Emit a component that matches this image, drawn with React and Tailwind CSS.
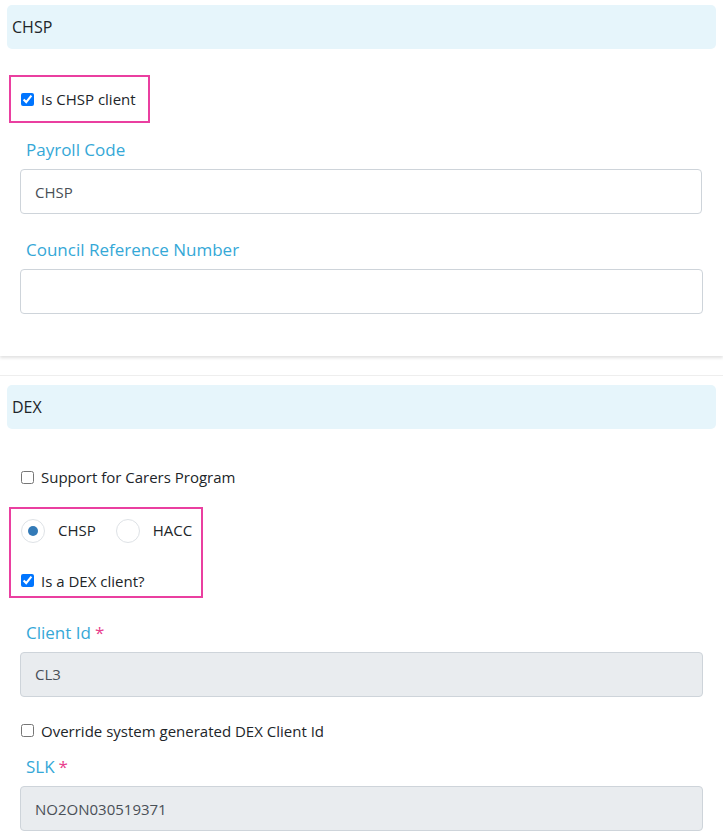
import { useState } from 'react';

const font = { fontFamily: '"Open Sans", "Noto Sans", sans-serif' };

function SectionHeader({ title }) {
  return (
    <div className="mx-[7px] h-[44px] rounded-[5px] bg-[#e6f5fb] flex items-center px-[5px] text-[16px] text-[#212529]">
      {title}
    </div>
  );
}

function Check({ label, checked, onChange }) {
  return (
    <label className="flex items-center gap-[7px] text-[15px] text-[#212529]">
      <input type="checkbox" checked={checked} onChange={onChange} className="w-[13px] h-[13px] m-0" />
      {label}
    </label>
  );
}

function Field({ label, required, value, disabled }) {
  return (
    <div className="px-[20px]">
      <div className="pl-[6px] text-[17px] text-[#35a8d7] leading-[24px] mb-[7px]">
        {label}
        {required && <span className="text-[#e83e8c] ml-[4px]">*</span>}
      </div>
      <input
        readOnly
        value={value}
        disabled={disabled}
        className={`w-full h-[45px] rounded-[4px] border border-[#ced4da] px-[14px] text-[15px] text-[#495057] outline-none ${disabled ? 'bg-[#e9ecef]' : 'bg-white'}`}
      />
    </div>
  );
}

function Radio({ label, checked, onClick }) {
  return (
    <button type="button" onClick={onClick} className="flex items-center gap-[13px] text-[15px] text-[#212529]">
      <span className="w-[24px] h-[24px] rounded-full border border-[#dee2e6] flex items-center justify-center bg-white">
        {checked && <span className="w-[10px] h-[10px] rounded-full bg-[#337ab7]" />}
      </span>
      {label}
    </button>
  );
}

export default function App() {
  const [chsp, setChsp] = useState(true);
  const [carers, setCarers] = useState(false);
  const [program, setProgram] = useState('CHSP');
  const [dex, setDex] = useState(true);
  const [override, setOverride] = useState(false);

  return (
    <div className="w-[723px] h-[840px] overflow-hidden bg-white" style={font}>
      {/* CHSP card */}
      <div className="pt-[5px] pb-[42px] shadow-[0_2px_3px_rgba(0,0,0,0.12)]">
        <SectionHeader title="CHSP" />
        <div className="ml-[9px] mt-[26px] w-[141px] h-[48px] border-2 border-[#ea3fa0] flex items-center pl-[10px]">
          <Check label="Is CHSP client" checked={chsp} onChange={e => setChsp(e.target.checked)} />
        </div>
        <div className="mt-[15px] space-y-[24px]">
          <div className="pr-[1px]"><Field label="Payroll Code" value="CHSP" /></div>
          <Field label="Council Reference Number" value="" />
        </div>
      </div>

      {/* DEX */}
      <div className="mt-[19px] border-t border-[#eeeeee] pt-[9px]">
        <SectionHeader title="DEX" />
        <div className="mt-[37px] pl-[21px]">
          <Check label="Support for Carers Program" checked={carers} onChange={e => setCarers(e.target.checked)} />
        </div>
        <div className="ml-[9px] mt-[18px] w-[194px] h-[91px] border-2 border-[#ea3fa0] pl-[10px] pt-[10px]">
          <div className="flex gap-[20px]">
            <Radio label="CHSP" checked={program === 'CHSP'} onClick={() => setProgram('CHSP')} />
            <Radio label="HACC" checked={program === 'HACC'} onClick={() => setProgram('HACC')} />
          </div>
          <div className="mt-[27px]">
            <Check label="Is a DEX client?" checked={dex} onChange={e => setDex(e.target.checked)} />
          </div>
        </div>
        <div className="mt-[23px]">
          <Field label="Client Id" required value="CL3" disabled />
        </div>
        <div className="mt-[23px] pl-[21px]">
          <Check label="Override system generated DEX Client Id" checked={override} onChange={e => setOverride(e.target.checked)} />
        </div>
        <div className="mt-[13px]">
          <Field label="SLK" required value="NO2ON030519371" disabled />
        </div>
      </div>
    </div>
  );
}
